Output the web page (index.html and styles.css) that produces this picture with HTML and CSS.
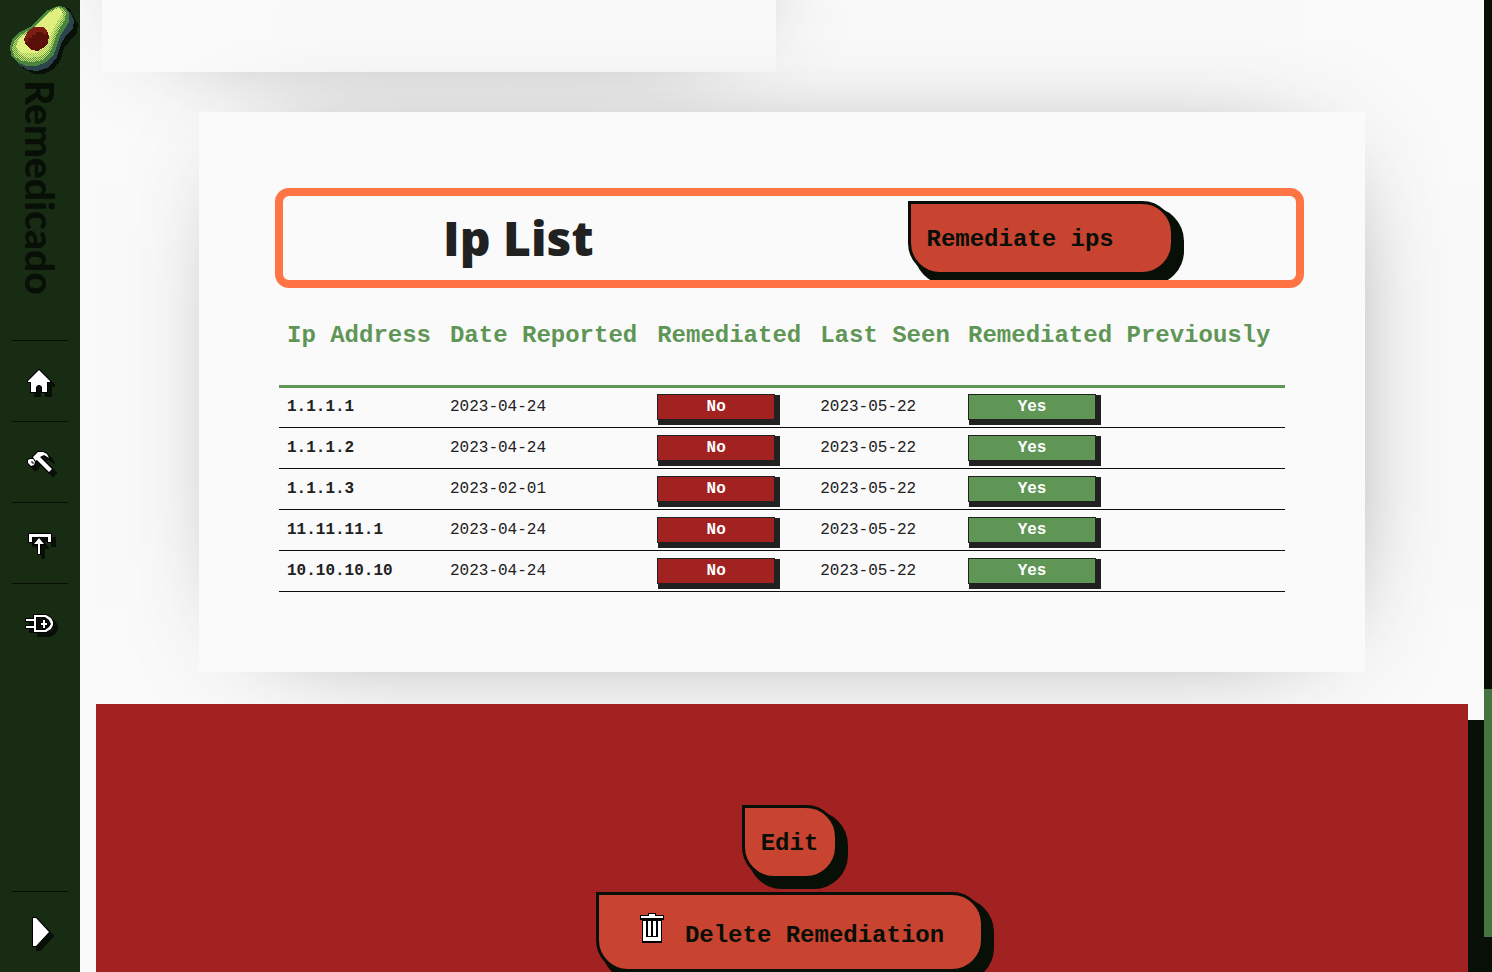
FILE: index.html
```html
<!DOCTYPE html>
<html lang="en">
<head>
<meta charset="utf-8">
<title>Remedicado</title>
<link rel="stylesheet" href="styles.css">
</head>
<body>
<nav class="sidebar" aria-label="Main">
  <a class="brand" href="#">
    <svg class="logo" viewBox="0 0 80 80" aria-hidden="true" shape-rendering="crispEdges">
      <defs>
        <pattern id="dither" width="2" height="2" patternUnits="userSpaceOnUse"><path d="M0 0h1v1H0zM1 1h1v1H1z" fill="#5f9a46"/></pattern>
        <pattern id="dither-light" width="2" height="2" patternUnits="userSpaceOnUse"><path d="M0 0h1v1H0zM1 1h1v1H1z" fill="#a3c65c"/></pattern>
      </defs>
      <path d="M62 6 L70 9 L73 16 L78 24 L77 33 L69 42 L64 48 L61 59 L54 69 L44 74 L34 74 L22 68z" fill="#081008"/>
      <path d="M64 8 L70 12 L74 20 L73 28 L65 37 L61 44 L57 57 L49 67 L38 71 L28 70 L18 64z" fill="#2b444d"/>
      <path d="M58 6 L65 7 L69 13 L69 22 L64 30 L60 36 L57 46 L53 56 L46 62 L37 66 L26 66 L17 62 L11 55 L10 46 L13 38 L20 32 L30 27 L38 19 L46 11z" fill="#4b853d"/>
      <path d="M57 7 L63 8 L66 13 L65 20 L60 28 L56 36 L53 46 L49 54 L42 60 L32 62 L22 61 L14 56 L12 48 L15 40 L22 34 L31 29 L39 21 L47 13z" fill="#c6e070"/>
      <path d="M57 7 L63 8 L66 13 L65 20 L60 28 L56 36 L53 46 L49 54 L42 60 L32 62 L22 61 L14 56 L12 48 L15 40 L22 34 L31 29 L39 21 L47 13z" fill="url(#dither)"/>
      <path d="M58 8 L62 11 L63 17 L58 26 L54 34 L51 45 L46 53 L38 57 L27 58 L19 54 L16 46 L19 39 L28 32 L38 24 L47 14z" fill="#dff080"/>
      <path d="M62 13 L63 18 L58 26 L54 34 L51 45 L46 53 L38 57 L27 58 L19 54 L17 49 L23 53 L36 53 L45 47 L50 36 L55 26z" fill="url(#dither-light)"/>
      <path d="M34 27h9l4 4 2 5-1 7-5 5-5 3-7-1-5-5-2-6 3-6z" fill="#5a0f0a"/>
      <path d="M34 27h9l4 4v3h-4v-2h-7v3h-4v3h-4v4h-3v-5l3-6z" fill="#7d1c12"/>
    </svg>
    <span class="brand-name">Remedicado</span>
  </a>
  <ul class="nav-list">
    <li><a class="nav-link" href="#" aria-label="Home"><svg class="icon" viewBox="0 0 32 32"><path d="M15 3 4 14v1h3v10h5v-5l2-2h2l2 2v5h5V15h3v-1z"/></svg></a></li>
    <li><a class="nav-link" href="#" aria-label="Tools"><svg class="icon" viewBox="0 0 32 32"><path d="M9 9l5-5h5l4 2 2 4-5-3-4 2 12 12-3 3-12-12-2 1z"/><path d="M6 11h3l2 3-1 3-3 1-3-3v-3z"/><path d="M7 14h2v2" class="detail"/></svg></a></li>
    <li><a class="nav-link" href="#" aria-label="Upload"><svg class="icon" viewBox="0 0 32 32"><path d="M5 5h22v8h-3V8H8v5H5z"/><path d="M15 9l-5 6h4v10h2V15h4z"/></svg></a></li>
    <li><a class="nav-link" href="#" aria-label="Add connection"><svg class="icon" viewBox="0 0 32 32"><path d="M10 5h12l5 3 2 4v3l-2 4-5 3H10v-4H2v-2h8v-5H2V9h8zM12 7v13h9l4-3 2-3-2-4-4-3zM17 13h2v-3h2v3h2v2h-2v3h-2v-3h-2z" fill-rule="evenodd"/></svg></a></li>
  </ul>
  <button class="expand" aria-label="Expand menu"><svg class="icon" viewBox="0 0 32 32"><path d="M9 2h3l13 14-13 14H9z"/></svg></button>
</nav>
<main class="page">
  <section class="content">
    <div class="previous-card"></div>
    <article class="card">
      <header class="card-header">
        <h2 class="card-title">Ip List</h2>
        <div class="card-action"><button class="button button-wide">Remediate ips</button></div>
      </header>
      <table class="ip-table">
        <colgroup><col class="col-ip"><col class="col-date"><col class="col-state"><col class="col-seen"><col></colgroup>
        <thead><tr><th>Ip Address</th><th>Date Reported</th><th>Remediated</th><th>Last Seen</th><th>Remediated Previously</th></tr></thead>
        <tbody>
          <tr><th scope="row">1.1.1.1</th><td>2023-04-24</td><td><span class="tag tag-no">No</span></td><td>2023-05-22</td><td><span class="tag tag-yes">Yes</span></td></tr>
          <tr><th scope="row">1.1.1.2</th><td>2023-04-24</td><td><span class="tag tag-no">No</span></td><td>2023-05-22</td><td><span class="tag tag-yes">Yes</span></td></tr>
          <tr><th scope="row">1.1.1.3</th><td>2023-02-01</td><td><span class="tag tag-no">No</span></td><td>2023-05-22</td><td><span class="tag tag-yes">Yes</span></td></tr>
          <tr><th scope="row">11.11.11.1</th><td>2023-04-24</td><td><span class="tag tag-no">No</span></td><td>2023-05-22</td><td><span class="tag tag-yes">Yes</span></td></tr>
          <tr><th scope="row">10.10.10.10</th><td>2023-04-24</td><td><span class="tag tag-no">No</span></td><td>2023-05-22</td><td><span class="tag tag-yes">Yes</span></td></tr>
        </tbody>
      </table>
    </article>
  </section>
  <section class="actions">
    <button class="button">Edit</button>
    <button class="button button-delete">
      <svg class="trash" viewBox="0 0 26 32" shape-rendering="crispEdges" aria-hidden="true"><path d="M9 1h8v2h8v5h-2v23H3V8H1V3h8z" fill="#000"/><path d="M10 2h6v2h8v2H2V4h8zM4 9h18v20H4z" fill="#fff"/><path d="M7 9h2v15H7zM12 9h2v15h-2zM17 9h2v15h-2zM7 24h12v1H7z" fill="#000"/></svg>
      <span>Delete Remediation</span>
    </button>
  </section>
</main>
<div class="scroll-track" aria-hidden="true"><div class="scroll-thumb"></div></div>
</body>
</html>
```
FILE: styles.css
```css
:root {
  --ink: #070f07;
  --forest: #182c14;
  --paper: #fafafa;
  --text: #212121;
  --red: #a22121;
  --brick: #c94331;
  --green: #5f9656;
  --orange: #ff7444;
  --card-shadow: 8px 4px 120px -70px rgba(0, 0, 0, .8);
}
* { box-sizing: border-box; }
body {
  margin: 0;
  display: flex;
  height: 100vh;
  overflow: hidden;
  background: var(--ink);
  color: var(--text);
  font: 16px/24px "Liberation Mono", monospace;
}
.sidebar {
  flex: 0 0 80px;
  min-width: 0;
  display: flex;
  flex-direction: column;
  padding: 0 12px;
  background: var(--forest);
}
.brand {
  display: flex;
  flex-direction: column;
  align-items: center;
  height: 340px;
  margin: 0 -12px;
  color: var(--ink);
  text-decoration: none;
}
.logo { flex: none; width: 80px; height: 80px; }
.brand-name {
  writing-mode: vertical-rl;
  font: 900 39px/48px Lato, sans-serif;
}
.nav-list { margin: 0; padding: 0; list-style: none; }
.nav-link, .expand {
  display: flex;
  align-items: center;
  justify-content: center;
  height: 81px;
  border: 0;
  border-top: 1px solid var(--ink);
}
.nav-link { padding-top: 4px; }
.expand { margin-top: auto; padding: 0; background: none; width: 100%; }
.icon {
  width: 32px;
  height: 32px;
  fill: #fff;
  stroke: #000;
  stroke-width: 2;
  paint-order: stroke;
  overflow: visible;
  filter: drop-shadow(4px 4px 0 var(--ink));
}
.detail { fill: none; stroke-width: 1; }
.page { flex: 1; min-width: 0; overflow: hidden; background: var(--paper); }
.content { padding-bottom: 48px; overflow: hidden; }
.previous-card {
  width: 48%;
  height: 472px;
  margin: -400px 0 0 22px;
  background: var(--paper);
  box-shadow: var(--card-shadow);
}
.card {
  margin: 40px 119px 0;
  padding: 76px 80px 80px;
  background: var(--paper);
  box-shadow: var(--card-shadow);
}
.card-header {
  display: grid;
  grid-template-columns: 1fr 1fr;
  align-items: center;
  height: 100px;
  margin: 0 -19px 0 -4px;
  border: 8px solid var(--orange);
  border-radius: 14px;
  overflow: hidden;
}
.card-title {
  margin: 0;
  padding-left: 160px;
  font: 800 48px/64px "Open Sans", sans-serif;
}
.card-action { padding-left: 118px; }
.button {
  display: flex;
  align-items: center;
  justify-content: center;
  height: 74px;
  padding: 4px 17px 0 16px;
  border: 3px solid var(--ink);
  border-radius: 0 32px 32px 32px;
  background: var(--brick);
  box-shadow: 8px 8px 0 2px var(--ink);
  color: var(--ink);
  font: bold 24px/32px "Liberation Mono", monospace;
}
.button-wide { padding-right: 57px; }
.button-delete { gap: 20px; height: 80px; padding: 8px 37px 0 40px; }
.trash { width: 26px; height: 32px; margin-bottom: 16px; }
.ip-table { width: 100%; table-layout: fixed; border-collapse: collapse; }
.col-ip, .col-state { width: 16.2%; }
.col-date { width: 20.6%; }
.col-seen { width: 14.7%; }
.ip-table th, .ip-table td {
  height: 41px;
  padding: 0 8px;
  border-bottom: 1px solid var(--ink);
  text-align: left;
  white-space: nowrap;
}
.ip-table thead th {
  height: 98px;
  border-bottom: 3px solid var(--green);
  color: var(--green);
  font-size: 24px;
}
.tag {
  display: block;
  height: 26px;
  border: 1px solid var(--text);
  box-shadow: 3px 3px 0 2px var(--text);
  color: #fff;
  text-align: center;
  font-weight: bold;
}
.tag-no { width: 118px; background: var(--red); }
.tag-yes { width: 128px; background: var(--green); }
.actions {
  position: relative;
  display: flex;
  flex-direction: column;
  align-items: center;
  gap: 13px;
  min-height: 400px;
  margin: -16px 16px 0;
  padding: 101px 0 101px 16px;
  background: var(--red);
  box-shadow: 16px 16px 0 var(--ink);
}
.scroll-track { flex: 0 0 8px; display: flex; flex-direction: column; justify-content: flex-end; padding-bottom: 35px; }
.scroll-thumb { height: 248px; background: #467440; }
```
